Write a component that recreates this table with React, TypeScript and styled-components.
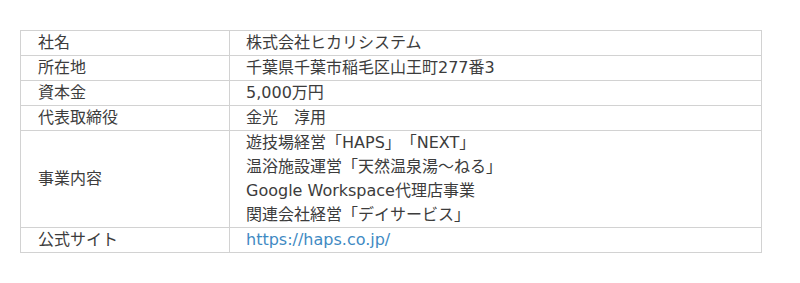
import React from "react";
import styled, { createGlobalStyle } from "styled-components";

const GlobalStyle = createGlobalStyle`
  html, body {
    margin: 0;
    padding: 0;
    background: #ffffff;
  }
  body {
    font-family: "DejaVu Sans", "Noto Sans CJK JP", sans-serif;
    color: #333333;
    text-spacing-trim: space-all;
  }
`;

const Page = styled.div`
  padding: 30px 20px;
`;

const Table = styled.table`
  width: 742px;
  border-collapse: collapse;
  font-size: 16px;
  line-height: 24px;
  text-spacing-trim: space-all;
`;

const Row = styled.tr``;

const HeadCell = styled.th`
  width: 191px;
  border: 1px solid #d2d2d2;
  padding: 0 0 0 17px;
  text-align: left;
  font-weight: normal;
  vertical-align: middle;
  color: #3c3c3c;
`;

const DataCell = styled.td`
  border: 1px solid #d2d2d2;
  padding: 0 0 0 16px;
  text-align: left;
  vertical-align: middle;
  color: #3c3c3c;
`;

const Line = styled.div``;

const Link = styled.a`
  color: #3f8ac3;
  text-decoration: none;
`;

const rows: { label: string; value: React.ReactNode }[] = [
  { label: "社名", value: "株式会社ヒカリシステム" },
  { label: "所在地", value: "千葉県千葉市稲毛区山王町277番3" },
  { label: "資本金", value: "5,000万円" },
  { label: "代表取締役", value: "金光　淳用" },
  {
    label: "事業内容",
    value: (
      <>
        <Line>遊技場経営「HAPS」「NEXT」</Line>
        <Line>温浴施設運営「天然温泉湯〜ねる」</Line>
        <Line>Google Workspace代理店事業</Line>
        <Line>関連会社経営「デイサービス」</Line>
      </>
    ),
  },
  {
    label: "公式サイト",
    value: <Link href="#">https://haps.co.jp/</Link>,
  },
];

export default function App() {
  return (
    <>
      <GlobalStyle />
      <Page>
        <Table>
          <tbody>
            {rows.map((r) => (
              <Row key={r.label}>
                <HeadCell>{r.label}</HeadCell>
                <DataCell>{r.value}</DataCell>
              </Row>
            ))}
          </tbody>
        </Table>
      </Page>
    </>
  );
}
